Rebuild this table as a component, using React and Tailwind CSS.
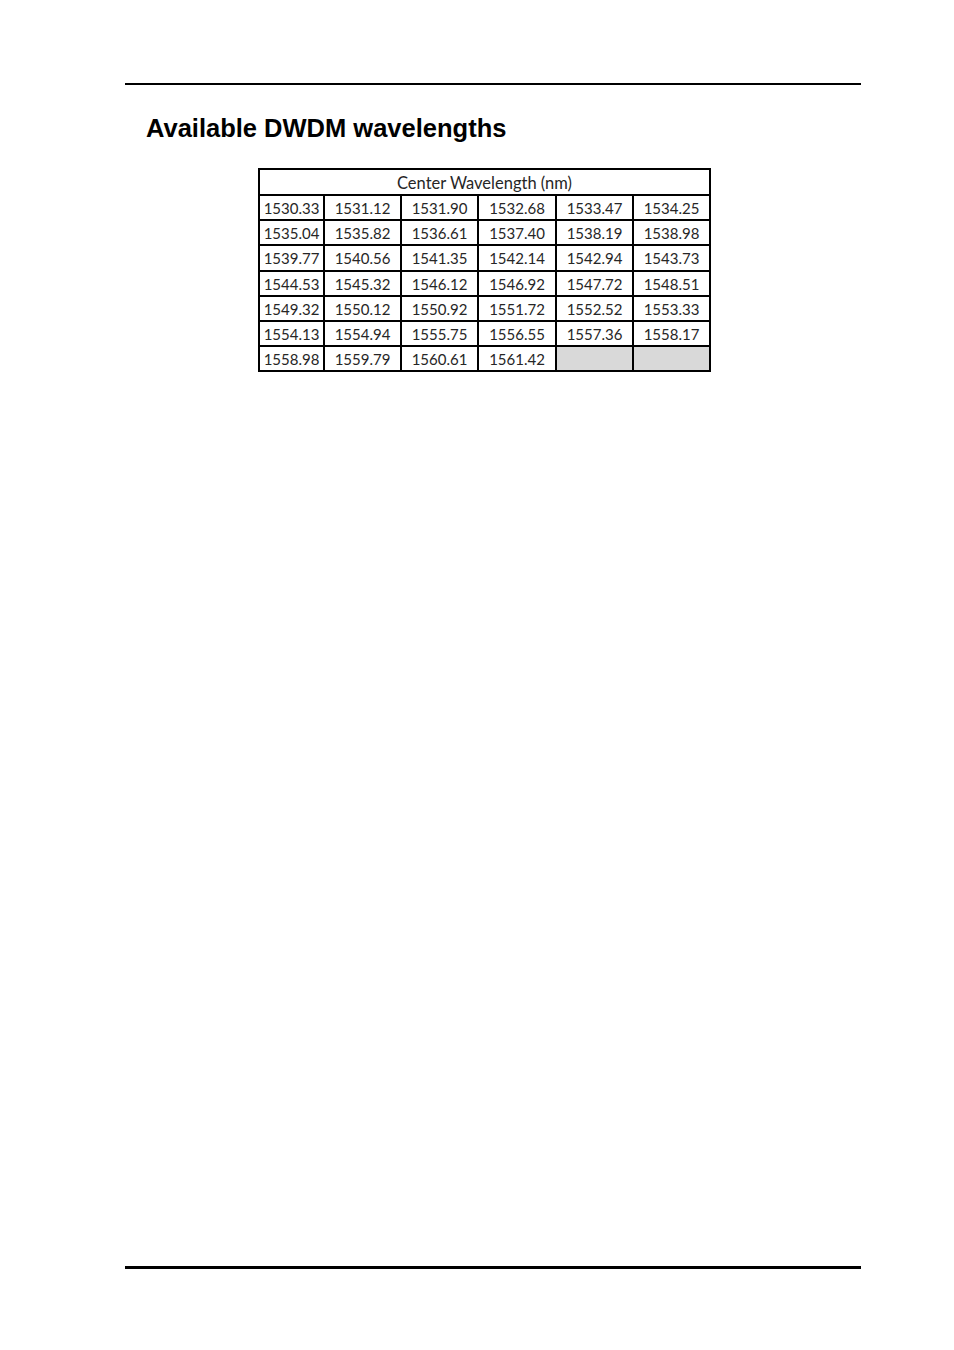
import React from "react";

const rows = [
  ["1530.33", "1531.12", "1531.90", "1532.68", "1533.47", "1534.25"],
  ["1535.04", "1535.82", "1536.61", "1537.40", "1538.19", "1538.98"],
  ["1539.77", "1540.56", "1541.35", "1542.14", "1542.94", "1543.73"],
  ["1544.53", "1545.32", "1546.12", "1546.92", "1547.72", "1548.51"],
  ["1549.32", "1550.12", "1550.92", "1551.72", "1552.52", "1553.33"],
  ["1554.13", "1554.94", "1555.75", "1556.55", "1557.36", "1558.17"],
  ["1558.98", "1559.79", "1560.61", "1561.42", "", ""],
];

const widths = ["w-[65px]", "w-[77px]", "w-[77px]", "w-[78px]", "w-[77px]", "w-[77px]"];

export default function App() {
  return (
    <div className="w-[954px] h-[1350px] bg-white flex flex-col">
      <div className="mt-[83px] ml-[125px] w-[736px] h-[2px] bg-black" />
      <h1 className="mt-[28px] ml-[146px] text-[25.5px] leading-[30px] font-bold text-black font-['Liberation_Sans',Arial,sans-serif]">
        Available DWDM wavelengths
      </h1>
      <div className="mt-[25px] ml-[258px]">
        <table className="border-collapse border-2 border-black font-['Lato','Liberation_Sans',sans-serif] text-[15px] text-[#262626]">
          <colgroup>
            {widths.map((w, i) => (
              <col key={i} className={w} />
            ))}
          </colgroup>
          <thead>
            <tr className="h-[26px]">
              <th colSpan={6} className="border-2 border-black font-normal text-[16.5px] text-center leading-none pt-[3px]">
                Center Wavelength (nm)
              </th>
            </tr>
          </thead>
          <tbody>
            {rows.map((r, ri) => (
              <tr key={ri} className="h-[25.2px]">
                {r.map((v, ci) => (
                  <td
                    key={ci}
                    className={
                      "border-2 border-black text-center leading-none p-0 pt-[2px] " +
                      (v === "" ? "bg-[#d9d9d9]" : "bg-white")
                    }
                  >
                    {v}
                  </td>
                ))}
              </tr>
            ))}
          </tbody>
        </table>
      </div>
      <div className="mt-auto mb-[81px] ml-[125px] w-[736px] h-[3px] bg-black" />
    </div>
  );
}
